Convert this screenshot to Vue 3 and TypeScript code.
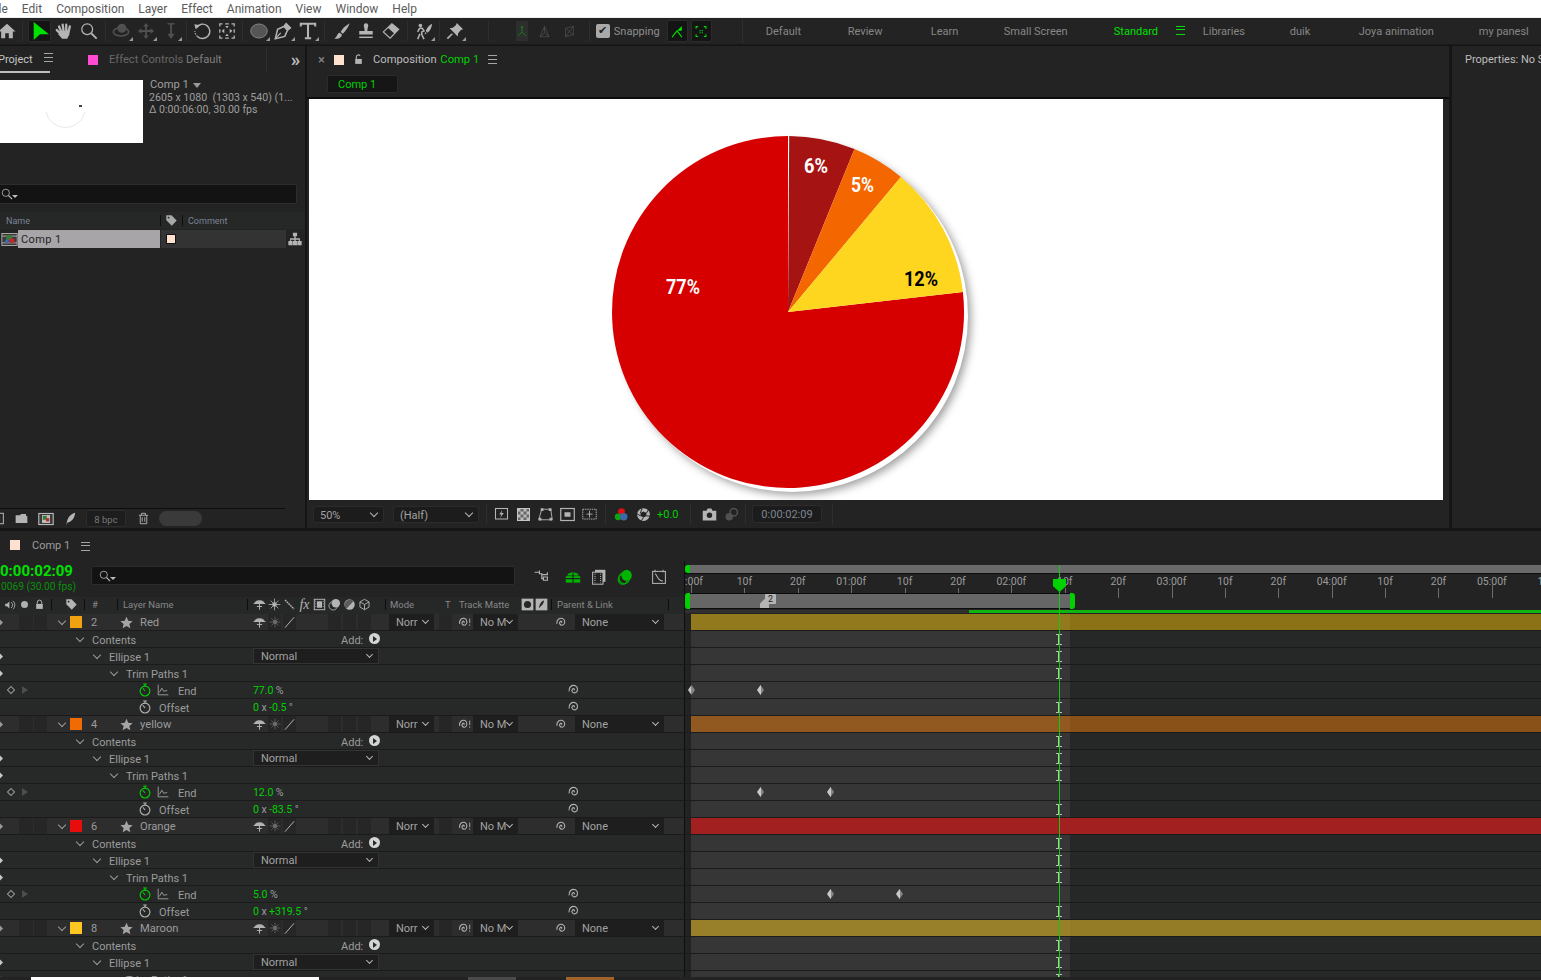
<script setup lang="ts">
import { computed } from 'vue'

// toolbar / panel glyphs, drawn on a 20x20 box
const ic: Record<string, string> = {
  home: '<path d="M10 2 19.5 10.5H16.5V18H12V12.5H8V18H3.5V10.5H.5Z" fill="currentColor"/>',
  arrow: '<path d="M3 0V20L10 13.5H20Z" fill="#00e000"/>',
  hand: '<g stroke="currentColor" stroke-width="2.6" stroke-linecap="round" fill="none"><path d="M7 11 4.5 5M9.5 10 8.5 3M12.5 10V3M15 11 16.5 5"/><path d="M4 11 2 9"/></g><path d="M5 10H16L16 14 13.5 18.5H8L3.5 13.5Z" fill="currentColor"/>',
  zoom: '<circle cx="8" cy="8" r="6" fill="none" stroke="currentColor" stroke-width="1.4"/><path d="M12.5 12.5 18.5 18.5" stroke="currentColor" stroke-width="2"/>',
  orbit: '<circle cx="11" cy="7" r="5" fill="currentColor"/><ellipse cx="10" cy="11" rx="8.5" ry="4.5" fill="none" stroke="currentColor" stroke-width="1.8"/>',
  move: '<path d="M10 1 13 5H11V9H15V7L19 10 15 13V11H11V15H13L10 19 7 15H9V11H5V13L1 10 5 7V9H9V5H7Z" fill="currentColor"/>',
  dolly: '<path d="M10 19 6 13H9V2H11V13H14Z" fill="currentColor"/><path d="M6 2H14" stroke="currentColor" stroke-width="1.5"/>',
  rotate: '<path d="M4 6A8 8 0 1 1 5 16" fill="none" stroke="currentColor" stroke-width="1.6"/><path d="M5 16A8 8 0 0 1 2 10" fill="none" stroke="currentColor" stroke-width="1.4" stroke-dasharray="1.5 1.5"/><path d="M1.5 2.5 8 3.5 3 8Z" fill="currentColor"/>',
  region: '<path d="M2 5V2H5M8 2H12M15 2H18V5M18 8V12M18 15V18H15M12 18H8M5 18H2V15M2 12V8" fill="none" stroke="currentColor" stroke-width="1.4"/><path d="M4 10 7 7.5V12.5ZM16 10 13 7.5V12.5ZM10 7 8 4.5H12ZM10 13 8 15.5H12Z" fill="currentColor"/>',
  ellipse: '<ellipse cx="10" cy="10" rx="9.2" ry="7.8" fill="#555" stroke="#8a8a8a" stroke-width="1"/>',
  pen: '<path d="M1.5 18.5 4 8 11 5 15 9 12 16Z" fill="none" stroke="currentColor" stroke-width="1.7"/><path d="M1.5 18.5 7.5 12M11.5 4 13.5 1.5 18.5 6.5 16 8.5Z" fill="currentColor" stroke="currentColor" stroke-width="1.3"/>',
  text: '<path d="M2 5V2H18V5M10 2V18M6.5 18H13.5" fill="none" stroke="currentColor" stroke-width="2.3"/>',
  brush: '<path d="M18.5 1.5C14 4 10 8 8.5 11L11 13C14 10.5 17 6 18.5 1.5Z" fill="currentColor"/><path d="M7.5 12C4.5 12.5 5 16.5 1.5 18.5 6 19.5 10 17 9.8 14Z" fill="currentColor"/>',
  stamp: '<path d="M7.5 4A2.5 2.5 0 0 1 12.5 4C12.5 6 11.5 7 11.5 10H17.5V14H2.5V10H8.5C8.5 7 7.5 6 7.5 4Z" fill="currentColor"/><path d="M2.5 17H17.5" stroke="currentColor" stroke-width="1.6"/>',
  eraser: '<path d="M1.5 11 11 2 18.5 8 9 18Z" fill="none" stroke="currentColor" stroke-width="1.3"/><path d="M6.5 6.5 11 2 18.5 8 14 13Z" fill="currentColor"/>',
  roto: '<circle cx="6" cy="4" r="2" fill="currentColor"/><path d="M5 7H8L10 10 7.5 11V14L10 19M5 7 3 11M5.5 13 3 19" fill="none" stroke="currentColor" stroke-width="1.7"/><path d="M19 2C15 4 13 7 12 10L14 12C17 10 18.5 6 19 2ZM11.5 11 10.5 14 13 12.5Z" fill="currentColor"/>',
  pin: '<path d="M12 1 19 8 16.5 9 13.5 12.5 13 16 4 7 7.5 6.5 11 3.5Z" fill="currentColor"/><path d="M7 13 1.5 18.5" stroke="currentColor" stroke-width="1.8"/>',
  axisA: '<path d="M10 2V12M10 12 3 18M10 12 17 18" fill="none" stroke="#0f8a0f" stroke-width="1.4"/><path d="M10 1 12 5H8Z" fill="#0f8a0f"/>',
  axisB: '<path d="M10 2V12M10 12 3 18M10 12 17 18M3 18H17M10 2 17 18M10 2 3 18" fill="none" stroke="currentColor" stroke-width="1.1"/>',
  axisC: '<path d="M4 5 16 2V15L4 18ZM4 5 16 15M16 2 4 18" fill="none" stroke="currentColor" stroke-width="1.1"/>',
  snapA: '<path d="M3 18 10 9 17 18" fill="none" stroke="#00e000" stroke-width="1.6"/><path d="M10 9 17 2V9Z" fill="#00e000"/>',
  snapB: '<path d="M3 6V3H6M14 3H17V6M17 14V17H14M6 17H3V14" fill="none" stroke="#00e000" stroke-width="1.5"/><path d="M8 8H9.5V9.5H8ZM11 8H12.5V9.5H11ZM8 11H9.5V12.5H8ZM11 11H12.5V12.5H11Z" fill="#00e000"/>',
  tag: '<path d="M2 2H10L18 10 10.5 18 2 9.5Z" fill="currentColor"/><circle cx="5.5" cy="5.5" r="1.4" fill="#222"/>',
  tree: '<path d="M7 1H13V6H11V9H17V13H19.5V19H13.5V13H15.5V11H11V13H13V19H7V13H9V11H4.5V13H6.5V19H.5V13H3V9H9V6H7Z" fill="currentColor"/>',
  comp: '<rect x="1" y="3" width="18" height="14" fill="#3a3a3a" stroke="#bbb"/><path d="M1 6H19M1 14H19" stroke="#bbb"/><rect x="6" y="5" width="7" height="6" fill="#3c7a3c"/><rect x="10" y="9" width="6" height="5" fill="#c02a2a"/><circle cx="7" cy="12" r="2.2" fill="#3d69b8"/>',
  folder: '<path d="M1 5H8L9 3H17V6H19V17H1Z" fill="currentColor"/>',
  film: '<rect x="1" y="3" width="18" height="14" fill="#3a3a3a" stroke="#ccc" stroke-width="1.2"/><rect x="5" y="5" width="10" height="10" fill="#bbb"/><rect x="6" y="6" width="5" height="5" fill="#3c7a3c"/><rect x="10" y="9" width="4" height="4" fill="#c02a2a"/>',
  feather: '<path d="M16 1C9 3 5 8 4 15L3 19 5 15C11 14 15 9 16 1Z" fill="currentColor"/>',
  trash: '<path d="M3 5H17M7 5V2H13V5M5 5V18H15V5M8 8V15M12 8V15" fill="none" stroke="currentColor" stroke-width="1.4"/>',
  burst: '<rect x="2" y="2" width="16" height="14" fill="none" stroke="currentColor" stroke-width="1.4"/><path d="M11 4 7 10H10L8 15 13 8H10Z" fill="currentColor"/>',
  grid: '<rect x="2" y="2" width="16" height="16" fill="#666" stroke="#ccc" stroke-width="1.3"/><path d="M2 2H6V6H2ZM10 2H14V6H10ZM6 6H10V10H6ZM14 6H18V10H14ZM2 10H6V14H2ZM10 10H14V14H10ZM6 14H10V18H6ZM14 14H18V18H14Z" fill="#bbb"/>',
  mask: '<path d="M5 3H17L19 17H1Z" fill="none" stroke="currentColor" stroke-width="1.2"/><path d="M3 1H7V5H3ZM15 1H19V5H15ZM0 15H4V19H0ZM16 15H20V19H16Z" fill="currentColor" transform="scale(.9) translate(1 1)"/>',
  safe: '<rect x="1" y="2" width="18" height="16" fill="none" stroke="currentColor" stroke-width="1.6"/><rect x="6" y="7" width="8" height="6" fill="currentColor"/>',
  guide: '<rect x="1" y="3" width="18" height="13" fill="none" stroke="currentColor" stroke-width="1.2" stroke-dasharray="2 1"/><path d="M10 5V14M6 9.5H14" stroke="currentColor" stroke-width="1.2"/>',
  rgb: '<circle cx="10" cy="6" r="4.5" fill="#e01010"/><circle cx="5.5" cy="13" r="4.5" fill="#0fa30f"/><circle cx="13" cy="13" r="5" fill="#3d69a8"/>',
  shutter: '<circle cx="10" cy="10" r="8.5" fill="currentColor"/><path d="M10 6 14 8V12L10 14 6 12V8Z" fill="#222"/><path d="M14 8 17 3M14 12 19 12M10 14 7 18.5M6 12 1.5 9M6 8 8 2" stroke="#222" stroke-width="1.3"/>',
  camera: '<path d="M1 5H6L7.5 2H12.5L14 5H19V18H1Z" fill="currentColor"/><circle cx="10" cy="11" r="3.6" fill="#222"/>',
  cameraDim: '<circle cx="13" cy="7" r="5" fill="none" stroke="#505050" stroke-width="2"/><circle cx="7" cy="13" r="5" fill="#505050"/>',
  flow: '<path d="M2 4H8M8 2V6H11V12H13M13 10H18V14H13ZM11 7H18V4" fill="none" stroke="currentColor" stroke-width="1.4"/>',
  shy: '<path d="M3 8C3 3 17 3 17 8ZM1 8.5H19M10 8V18M6 13H14" fill="currentColor" stroke="currentColor" stroke-width="1.5"/>',
  shyGreen: '<path d="M3 8C3 3 17 3 17 8Z" fill="#00b400"/><path d="M1 9H19V17H1Z" fill="#00b400"/><path d="M10 5V17M1 12H19" stroke="#1f1f1f" stroke-width="1.4"/>',
  frames: '<rect x="5" y="1" width="13" height="15" fill="currentColor"/><rect x="2" y="4" width="13" height="15" fill="#222" stroke="currentColor" stroke-width="1.3"/><path d="M5 6V17M12 6V17" stroke="currentColor" stroke-width="1.3" stroke-dasharray="1.3 1.3"/>',
  blurGreen: '<ellipse cx="12" cy="8" rx="6.5" ry="7" fill="#00b400"/><ellipse cx="9" cy="11.5" rx="6.5" ry="7" fill="none" stroke="#00b400" stroke-width="1.5"/><ellipse cx="7" cy="13" rx="5.5" ry="6" fill="none" stroke="#00b400" stroke-width="1.3"/>',
  graphEd: '<rect x="2" y="3" width="16" height="15" fill="none" stroke="currentColor" stroke-width="1.3"/><path d="M5 6C8 7 8 15 15 15M5 1V4M15 1V4" fill="none" stroke="currentColor" stroke-width="1.3"/>',
  speaker: '<path d="M2 8H5L9 4V16L5 12H2Z" fill="currentColor"/><path d="M12 5C15 8 15 12 12 15M15 3C19 7 19 13 15 17" fill="none" stroke="currentColor" stroke-width="1.4"/>',
  lock: '<path d="M6 9V6A4 4 0 0 1 14 6V9" fill="none" stroke="currentColor" stroke-width="1.8"/><rect x="4" y="9" width="12" height="9" fill="currentColor"/>',
  sun: '<circle cx="10" cy="10" r="3.5" fill="currentColor"/><path d="M10 1V19M1 10H19M4 4 16 16M16 4 4 16" stroke="currentColor" stroke-width="1.2"/>',
  slash: '<path d="M3 3 17 17" stroke="currentColor" stroke-width="2" stroke-dasharray="3 .8"/>',
  slashUp: '<path d="M3 18 17 2" stroke="currentColor" stroke-width="1.5"/>',
  filmCol: '<rect x="2" y="2" width="16" height="16" fill="none" stroke="currentColor" stroke-width="1.5"/><rect x="6" y="5" width="8" height="10" fill="currentColor"/><path d="M3 5H5M3 9H5M3 13H5M15 5H17M15 9H17M15 13H17" stroke="currentColor"/>',
  blur: '<circle cx="12" cy="8" r="6.5" fill="currentColor"/><circle cx="8" cy="12" r="6.5" fill="none" stroke="currentColor" stroke-width="1.3"/>',
  half: '<circle cx="10" cy="10" r="8" fill="currentColor"/><path d="M5 17 16 5A8 8 0 0 0 5 17Z" fill="#222" opacity=".6"/>',
  cube: '<path d="M10 2 17 6V14L10 18 3 14V6ZM3 6 10 10 17 6M10 10V18" fill="none" stroke="currentColor" stroke-width="1.4"/>',
  maskCol: '<rect x="1" y="1" width="18" height="18" fill="currentColor"/><circle cx="10" cy="10" r="5.5" fill="#262626"/>',
  pickCol: '<rect x="1" y="1" width="18" height="18" fill="currentColor"/><path d="M14 4C9 5 7 10 6 16 9 12 13 11 14 4Z" fill="#262626"/>',
  spiral: '<path d="M10 10.5C11.5 9 9.5 7 8 8.5 5.5 11 8 15 12 14 16 12.5 16 6 12 4 7 2 2 6 3 12" fill="none" stroke="currentColor" stroke-width="1.6"/>',
  spiralM: '<path d="M9 10.5C10.5 9 8.5 7 7 8.5 4.5 11 7 15 11 14 14.5 12.5 14.5 6 11 4 6 2 1.5 6 2.5 12" fill="none" stroke="currentColor" stroke-width="1.6"/><path d="M18 4V11M18 13V15" stroke="currentColor" stroke-width="1.4"/>',
  star: '<path d="M10 1 12.7 7.3 19.5 7.9 14.4 12.4 15.9 19 10 15.5 4.1 19 5.6 12.4.5 7.9 7.3 7.3Z" fill="currentColor"/>',
  watch: '<circle cx="10" cy="11.5" r="7" fill="none" stroke="currentColor" stroke-width="1.6"/><path d="M7.5 1.5H12.5M10 1.5V5M10 11.5 7 7.5" fill="none" stroke="currentColor" stroke-width="1.5"/>',
  graph: '<path d="M2 1V18H19" fill="none" stroke="currentColor" stroke-width="1.3"/><path d="M4 14 8 7 11 12 17 11" fill="none" stroke="currentColor" stroke-width="1.3"/>',
  lockOpen: '<path d="M6 9V5A4 4 0 0 1 13 3" fill="none" stroke="currentColor" stroke-width="2"/><rect x="4" y="9" width="12" height="9" fill="currentColor"/>',
}

const menus = ['File', 'Edit', 'Composition', 'Layer', 'Effect', 'Animation', 'View', 'Window', 'Help']

type ToolGroup = { name: string; corner?: boolean; dim?: boolean }[]
const toolGroups: ToolGroup[] = [
  [{ name: 'orbit', corner: true, dim: true }, { name: 'move', corner: true, dim: true }, { name: 'dolly', corner: true, dim: true }],
  [{ name: 'rotate' }, { name: 'region' }],
  [{ name: 'ellipse', corner: true }, { name: 'pen', corner: true }, { name: 'text', corner: true }],
  [{ name: 'brush' }, { name: 'stamp' }, { name: 'eraser' }],
  [{ name: 'roto', corner: true }],
  [{ name: 'pin', corner: true }],
]

const workspaces = [
  { label: 'Default', w: 82 },
  { label: 'Review', w: 83 },
  { label: 'Learn', w: 73 },
  { label: 'Small Screen', w: 110 },
  { label: 'Standard', w: 62, active: true },
  { label: '', w: 27, menu: true },
  { label: 'Libraries', w: 87 },
  { label: 'duik', w: 69 },
  { label: 'Joya animation', w: 120 },
  { label: 'my panesl', w: 61 },
]

const headSwitches = ['shy', 'sun', 'slash', 'fx', 'filmCol', 'blur', 'half', 'cube']

// pie, angles clockwise from 12 o'clock
const CX = 479
const CY = 213
const R = 176
function wedge(from: number, to: number) {
  const p = (a: number) => {
    const r = (a * Math.PI) / 180
    return `${(CX + R * Math.sin(r)).toFixed(1)} ${(CY - R * Math.cos(r)).toFixed(1)}`
  }
  return `M${CX} ${CY}L${p(from)}A${R} ${R} 0 ${to - from > 180 ? 1 : 0} 1 ${p(to)}Z`
}
const slices = [
  { color: '#d60000', d: wedge(83.5, 360) },
  { color: '#a51313', d: wedge(0.4, 22.2) },
  { color: '#f46600', d: wedge(22.2, 39.9) },
  { color: '#ffd61f', d: wedge(39.9, 83.5) },
]
const pieLabels = [
  { t: '6%', x: 507, y: 74, w: 24, c: '#fff' },
  { t: '5%', x: 553.5, y: 93, w: 23, c: '#fff' },
  { t: '12%', x: 612, y: 187, w: 34, c: '#000' },
  { t: '77%', x: 374, y: 195, w: 34, c: '#fff' },
]

const rulerLabels = ['0:00f', '10f', '20f', '01:00f', '10f', '20f', '02:00f', '10f', '20f', '03:00f', '10f', '20f', '04:00f', '10f', '20f', '05:00f', '10f']

interface Row {
  kind: 'layer' | 'contents' | 'ellipse' | 'trim' | 'end' | 'offset'
  num?: string
  name?: string
  swatch?: string
  barIn?: string
  barOut?: string
  value?: string
  angle?: string
  keys?: number[]
}

const layers = [
  { num: '2', name: 'Red', swatch: '#f0a30f', barIn: '#92791d', barOut: '#8c7217', end: '77.0', angle: '-0.5', keys: [0, 69] },
  { num: '4', name: 'yellow', swatch: '#f06a06', barIn: '#91581f', barOut: '#895118', end: '12.0', angle: '-83.5', keys: [69, 139] },
  { num: '6', name: 'Orange', swatch: '#e80d0d', barIn: '#a32020', barOut: '#a32020', end: '5.0', angle: '+319.5', keys: [139, 208] },
  { num: '8', name: 'Maroon', swatch: '#fdc620', barIn: '#98802b', barOut: '#947c26', end: '', angle: '', keys: [] },
]

const rows = computed<Row[]>(() => {
  const out: Row[] = []
  for (const l of layers) {
    out.push({ kind: 'layer', num: l.num, name: l.name, swatch: l.swatch, barIn: l.barIn, barOut: l.barOut })
    out.push({ kind: 'contents' }, { kind: 'ellipse' }, { kind: 'trim' })
    if (l.end) {
      out.push({ kind: 'end', value: l.end, keys: l.keys })
      out.push({ kind: 'offset', angle: l.angle })
    }
  }
  return out
})
</script>

<template>
  <div class="app">
    <div class="menu">
      <span v-for="m in menus" :key="m">{{ m }}</span>
    </div>

    <div class="toolbar">
      <svg class="ic tool-home" viewBox="0 0 20 20" v-html="ic.home"></svg>
      <i class="tsep first"></i>
      <div class="tool-box"><svg class="ic" viewBox="0 0 20 20" v-html="ic.arrow"></svg></div>
      <div class="tool"><svg class="ic" viewBox="0 0 20 20" v-html="ic.hand"></svg></div>
      <div class="tool"><svg class="ic" viewBox="0 0 20 20" v-html="ic.zoom"></svg></div>
      <template v-for="(g, i) in toolGroups" :key="i">
        <i class="tsep" :class="'g' + i"></i>
        <div v-for="t in g" :key="t.name" class="tool" :class="{ dim: t.dim, corner: t.corner }">
          <svg class="ic" viewBox="0 0 20 20" v-html="ic[t.name]"></svg>
        </div>
      </template>
      <i class="tsep wide"></i>
      <div class="axis-on"><svg class="ic" viewBox="0 0 20 20" v-html="ic.axisA"></svg></div>
      <div class="tool axis dim"><svg class="ic" viewBox="0 0 20 20" v-html="ic.axisB"></svg></div>
      <div class="tool axis dim"><svg class="ic" viewBox="0 0 20 20" v-html="ic.axisC"></svg></div>
      <i class="tsep snap-sep"></i>
      <span class="check">✔</span>
      <span class="snap-label">Snapping</span>
      <div class="snap-btn"><svg class="ic" viewBox="0 0 20 20" v-html="ic.snapA"></svg></div>
      <div class="snap-btn"><svg class="ic" viewBox="0 0 20 20" v-html="ic.snapB"></svg></div>
      <i class="tsep ws-sep"></i>
      <div class="workspaces">
        <div v-for="w in workspaces" :key="w.w + w.label" class="ws" :class="{ on: w.active }" :style="{ width: w.w + 'px' }">
          <span v-if="w.menu" class="burger green"></span>
          <template v-else>{{ w.label }}</template>
        </div>
      </div>
    </div>

    <div class="top">
      <section class="panel project">
        <div class="tabs">
          <div class="tab-project">Project<span class="burger"></span></div>
          <i class="pink"></i>
          <span class="tab-dim">Effect Controls <b>Default</b></span>
          <i class="vsep"></i>
          <span class="chev">»</span>
        </div>
        <div class="info">
          <div class="thumb">
            <svg viewBox="0 0 143 63" width="143" height="63"><path d="M46 32A20 20 0 0 0 85 32" fill="none" stroke="#e8e8e8"/><rect x="79" y="25" width="3" height="2" fill="#444"/></svg>
          </div>
          <div class="meta">
            <div class="meta-name">Comp 1 <i class="tri"></i></div>
            <div>2605 x 1080&nbsp; (1303 x 540) (1...</div>
            <div>Δ 0:00:06:00, 30.00 fps</div>
          </div>
        </div>
        <div class="search proj-search"><svg class="ic s12" viewBox="0 0 20 20" v-html="ic.zoom"></svg><i class="tri small"></i></div>
        <div class="proj-cols">
          <span class="col-name">Name</span>
          <i class="bar-sep"></i>
          <svg class="ic s13 tag" viewBox="0 0 20 20" v-html="ic.tag"></svg>
          <i class="bar-sep"></i>
          <span class="col-comment">Comment</span>
        </div>
        <div class="proj-row">
          <svg class="ic comp-ic" viewBox="0 0 20 20" v-html="ic.comp"></svg>
          <span class="proj-name">Comp 1</span>
          <span class="proj-cell"><i class="peach"></i></span>
          <svg class="ic s14 tree" viewBox="0 0 20 20" v-html="ic.tree"></svg>
        </div>
        <div class="proj-foot">
          <svg class="ic s13 foot-first" viewBox="0 0 20 20" v-html="ic.safe"></svg>
          <svg class="ic s13" viewBox="0 0 20 20" v-html="ic.folder"></svg>
          <svg class="ic s16" viewBox="0 0 20 20" v-html="ic.film"></svg>
          <svg class="ic s14" viewBox="0 0 20 20" v-html="ic.feather"></svg>
          <span class="bpc">8 bpc</span>
          <svg class="ic s13" viewBox="0 0 20 20" v-html="ic.trash"></svg>
          <i class="pill"></i>
        </div>
      </section>

      <section class="panel comp">
        <div class="tabs comp-tabs">
          <span class="close">×</span>
          <i class="peach big"></i>
          <svg class="ic s11 lockopen" viewBox="0 0 20 20" v-html="ic.lockOpen"></svg>
          <span class="comp-title">Composition <em>Comp 1</em></span>
          <span class="burger"></span>
        </div>
        <div class="subtabs"><span class="subtab">Comp 1</span></div>
        <div class="viewer">
          <svg class="pie" viewBox="0 0 1134 401" width="1134" height="401">
            <circle class="pie-back" :cx="CX + 4" :cy="CY + 4" :r="R" fill="#fff" />
            <path v-for="s in slices" :key="s.color" :d="s.d" :fill="s.color" />
            <text v-for="l in pieLabels" :key="l.t" :x="l.x" :y="l.y" :fill="l.c" :textLength="l.w" lengthAdjust="spacingAndGlyphs" class="pie-text">{{ l.t }}</text>
          </svg>
        </div>
        <div class="view-foot">
          <span class="vf-dd pct">50%<i class="caret"></i></span>
          <span class="vf-dd half">(Half)<i class="caret"></i></span>
          <i class="vf-sep a"></i>
          <svg class="ic s15" viewBox="0 0 20 20" v-html="ic.burst"></svg>
          <svg class="ic s15" viewBox="0 0 20 20" v-html="ic.grid"></svg>
          <svg class="ic s15" viewBox="0 0 20 20" v-html="ic.mask"></svg>
          <svg class="ic s15" viewBox="0 0 20 20" v-html="ic.safe"></svg>
          <svg class="ic s15" viewBox="0 0 20 20" v-html="ic.guide"></svg>
          <i class="vf-sep b"></i>
          <svg class="ic s15" viewBox="0 0 20 20" v-html="ic.rgb"></svg>
          <svg class="ic s15" viewBox="0 0 20 20" v-html="ic.shutter"></svg>
          <span class="exposure">+0.0</span>
          <i class="vf-sep c"></i>
          <svg class="ic s15" viewBox="0 0 20 20" v-html="ic.camera"></svg>
          <svg class="ic s15" viewBox="0 0 20 20" v-html="ic.cameraDim"></svg>
          <i class="vf-sep d"></i>
          <span class="vf-time">0:00:02:09</span>
          <i class="vf-sep"></i>
        </div>
      </section>

      <section class="panel props"><div class="props-title">Properties: No Selection</div></section>
    </div>

    <section class="timeline">
      <div class="tl-tab">
        <i class="peach tall"></i>
        <span class="tl-name">Comp 1</span>
        <span class="burger"></span>
      </div>

      <div class="tl-head">
        <div class="tl-left">
          <div class="ctrl">
            <div class="clock">
              <div class="time">0:00:02:09</div>
              <div class="fps">0069 (30.00 fps)</div>
            </div>
            <div class="search tl-search"><svg class="ic s12" viewBox="0 0 20 20" v-html="ic.zoom"></svg><i class="tri small"></i></div>
            <svg class="ic s16 first-ctl" viewBox="0 0 20 20" v-html="ic.flow"></svg>
            <svg class="ic s16 second-ctl" viewBox="0 0 20 20" v-html="ic.shyGreen"></svg>
            <svg class="ic s16" viewBox="0 0 20 20" v-html="ic.frames"></svg>
            <svg class="ic s16" viewBox="0 0 20 20" v-html="ic.blurGreen"></svg>
            <svg class="ic s16 last-ctl" viewBox="0 0 20 20" v-html="ic.graphEd"></svg>
          </div>
          <div class="cols">
            <svg class="ic s12 hc-speaker" viewBox="0 0 20 20" v-html="ic.speaker"></svg>
            <i class="hdot"></i>
            <svg class="ic s11 hc-lock" viewBox="0 0 20 20" v-html="ic.lock"></svg>
            <i class="hsep hs1"></i>
            <svg class="ic s13 hc-tag" viewBox="0 0 20 20" v-html="ic.tag"></svg>
            <i class="hsep hs2"></i>
            <span class="hnum">#</span>
            <i class="hsep hs3"></i>
            <span class="hname">Layer Name</span>
            <i class="hsep"></i>
            <div class="hswitches">
              <template v-for="s in headSwitches" :key="s">
                <span v-if="s === 'fx'" class="fx">fx</span>
                <svg v-else class="ic s13" viewBox="0 0 20 20" v-html="ic[s]"></svg>
              </template>
            </div>
            <i class="hsep hs4"></i>
            <span class="hmode">Mode</span>
            <span class="ht">T</span>
            <span class="htm">Track Matte</span>
            <svg class="ic s13 hmask" viewBox="0 0 20 20" v-html="ic.maskCol"></svg>
            <svg class="ic s13 hpick" viewBox="0 0 20 20" v-html="ic.pickCol"></svg>
            <i class="hsep hs5"></i>
            <span class="hparent">Parent &amp; Link</span>
            <i class="hsep hs6"></i>
          </div>
        </div>
        <div class="tl-right">
          <div class="navbar"><i class="handle"></i><i class="nav-fill"></i></div>
          <div class="ruler">
            <div v-for="(r, i) in rulerLabels" :key="i" class="tick">
              <span>{{ r }}</span>
              <i :class="{ major: i % 3 === 0 }"></i>
            </div>
          </div>
          <div class="workbar">
            <i class="handle"></i>
            <div class="work-fill">
              <span class="marker">2</span>
            </div>
            <i class="handle right"></i>
          </div>
          <div class="cachebar"><i></i></div>
        </div>
      </div>

      <div class="tl-rows">
        <div v-for="(r, i) in rows" :key="i" class="row" :class="'row-' + r.kind">
          <div class="row-left">
            <template v-if="r.kind === 'layer'">
              <i class="lead-mark"></i>
              <i class="cell c-a"></i><i class="cell c-b"></i>
              <i class="vee v-layer"></i>
              <i class="swatch" :style="{ background: r.swatch }"></i>
              <span class="num">{{ r.num }}</span>
              <svg class="ic s13 star" viewBox="0 0 20 20" v-html="ic.star"></svg>
              <span class="lname">{{ r.name }}</span>
              <span class="sw"><svg class="ic s13" viewBox="0 0 20 20" v-html="ic.shy"></svg></span>
              <span class="sw dark s-sun"><svg class="ic s12" viewBox="0 0 20 20" v-html="ic.sun"></svg></span>
              <span class="sw dark s-slash"><svg class="ic s13" viewBox="0 0 20 20" v-html="ic.slashUp"></svg></span>
              <i class="cell c-c"></i><i class="cell c-d"></i><i class="cell c-d"></i>
              <span class="dd dd-mode">Norr<i class="caret"></i></span>
              <i class="cell c-t"></i>
              <svg class="ic s13 sp1" viewBox="0 0 20 20" v-html="ic.spiralM"></svg>
              <span class="dd dd-mode dd-tm">No M<i class="caret"></i></span>
              <svg class="ic s13 sp2" viewBox="0 0 20 20" v-html="ic.spiral"></svg>
              <span class="dd dd-parent">None<i class="caret"></i></span>
            </template>
            <template v-else-if="r.kind === 'contents'">
              <i class="vee v-contents"></i>
              <span class="label">Contents</span>
              <span class="add">Add:</span>
              <span class="add-btn"></span>
            </template>
            <template v-else-if="r.kind === 'ellipse'">
              <i class="lead-mark sub"></i>
              <i class="vee v-ellipse"></i>
              <span class="label">Ellipse 1</span>
              <span class="dd dd-normal">Normal<i class="caret"></i></span>
            </template>
            <template v-else-if="r.kind === 'trim'">
              <i class="lead-mark sub"></i>
              <i class="vee v-trim"></i>
              <span class="label">Trim Paths 1</span>
            </template>
            <template v-else-if="r.kind === 'end'">
              <i class="nav-diamond"></i>
              <i class="nav-tri"></i>
              <span class="watch on"><svg class="ic s14" viewBox="0 0 20 20" v-html="ic.watch"></svg></span>
              <svg class="ic s12 graph" viewBox="0 0 20 20" v-html="ic.graph"></svg>
              <span class="label end-label">End</span>
              <span class="val"><em>{{ r.value }}</em> %</span>
              <svg class="ic s14 row-spiral" viewBox="0 0 20 20" v-html="ic.spiral"></svg>
            </template>
            <template v-else>
              <span class="watch off"><svg class="ic s14" viewBox="0 0 20 20" v-html="ic.watch"></svg></span>
              <span class="label off-label">Offset</span>
              <span class="val"><em>0</em> x <em>{{ r.angle }}</em> °</span>
              <svg class="ic s14 row-spiral" viewBox="0 0 20 20" v-html="ic.spiral"></svg>
            </template>
          </div>
          <div class="row-track">
            <div class="bar-in" :style="r.barIn ? { background: r.barIn } : undefined">
              <i v-for="k in r.keys" :key="k" class="key" :style="{ left: k + 'px' }"></i>
              <i v-if="r.kind !== 'layer' && r.kind !== 'end'" class="beam"></i>
            </div>
            <div class="bar-out" :style="r.barOut ? { background: r.barOut } : undefined"></div>
          </div>
        </div>
        <i class="playline"></i>
      </div>
      <i class="playhead"></i>
    </section>

    <div class="strip">
      <i class="s-white"></i><i class="s-gray"></i><i class="s-orange"></i>
    </div>
  </div>
</template>

<style scoped>
.app {
  position: relative;
  width: 1541px;
  height: 980px;
  overflow: hidden;
  background: #151515;
  font-family: Roboto, "Noto Sans", Arial, sans-serif;
  font-size: 11px;
  color: #9b9b9b;
  display: flex;
  flex-direction: column;
}
i { display: block; flex: none; font-style: normal; }
em { font-style: normal; }
.ic { display: block; flex: none; width: 18px; height: 18px; color: #b4b4b4; }
.s11 { width: 11px; height: 11px; }
.s12 { width: 12px; height: 12px; }
.s13 { width: 13px; height: 13px; }
.s14 { width: 14px; height: 14px; }
.s15 { width: 15px; height: 15px; }
.s16 { width: 16px; height: 16px; }

.burger {
  display: inline-block;
  width: 9px;
  height: 7px;
  border-top: 1px solid #a5a5a5;
  border-bottom: 1px solid #a5a5a5;
  position: relative;
  flex: none;
}
.burger::after {
  content: "";
  position: absolute;
  left: 0;
  right: 0;
  top: 2.5px;
  height: 1px;
  background: #a5a5a5;
}
.burger.green { border-color: #00e000; }
.burger.green::after { background: #00e000; }

/* menu */
.menu {
  height: 17px;
  background: #fff;
  border-bottom: 1px solid #eee;
  display: flex;
  align-items: center;
  gap: 14px;
  margin-left: -11px;
  font-size: 12px;
  color: #5c5c5c;
  flex: none;
}

/* toolbar */
.toolbar {
  height: 26px;
  flex: none;
  background: #232323;
  display: flex;
  align-items: center;
  border-bottom: 1px solid #1a1a1a;
}
.toolbar > * { flex: none; }
.tool-home { margin-left: -2px; width: 18px; height: 18px; }
.tool { width: 24.7px; display: flex; justify-content: center; position: relative; }
.tool.dim .ic { color: #505050; }
.tool.corner::after {
  content: "";
  position: absolute;
  right: 1px;
  bottom: -1px;
  border: 2px solid transparent;
  border-right-color: #9a9a9a;
  border-bottom-color: #9a9a9a;
}
.tsep { width: 1px; height: 20px; background: #2f2f2f; margin: 0 4px; }
.tsep.first { margin: 0 5px 0 6px; }
.tsep.g0 { margin: 0 3px 0 4px; }
.tsep.g1 { margin: 0 3px; }
.tsep.g2 { margin: 0 3px; }
.tsep.g3 { margin: 0 4px; }
.tsep.g4 { margin: 0 3px 0 4px; }
.tsep.g5 { margin: 0 2.3px 0 3px; }
.tsep.wide { margin: 0 26.7px 0 21px; }
.tool-box {
  width: 23px;
  height: 22px;
  margin-right: 0.5px;
  background: #141414;
  border: 1px solid #2c2c2c;
  border-radius: 2px;
  box-sizing: border-box;
  display: flex;
  align-items: center;
  justify-content: center;
}
.axis-on {
  width: 12px;
  height: 20px;
  margin-right: 4px;
  background: #2e2e2e;
  display: flex;
  justify-content: center;
  align-items: center;
}
.axis-on .ic { width: 12px; height: 14px; }
.axis { width: 25px; }
.axis .ic { width: 13px; height: 13px; }
.tsep.snap-sep { margin: 0 6px 0 7px; }
.check {
  width: 14px;
  height: 14px;
  background: #a9a9a9;
  color: #222;
  border-radius: 2px;
  font-size: 11px;
  line-height: 14px;
  text-align: center;
}
.snap-label { margin-left: 4px; width: 53px; color: #8f8f8f; }
.snap-btn {
  width: 21px;
  height: 22px;
  background: #141414;
  border: 1px solid #2c2c2c;
  border-radius: 2px;
  box-sizing: border-box;
  margin-right: 3px;
  display: flex;
  align-items: center;
  justify-content: center;
}
.snap-btn .ic { width: 14px; height: 15px; }
.tsep.ws-sep { margin: 0 23px 0 27px; height: 24px; }
.workspaces { display: flex; align-items: center; }
.ws { color: #878787; white-space: nowrap; flex: none; }
.ws.on { color: #00e000; }

/* top row */
.top { height: 483px; flex: none; display: flex; gap: 2px; padding-top: 1px; box-sizing: border-box; }
.panel { background: #232323; position: relative; overflow: hidden; }
.project { width: 305px; flex: none; display: flex; flex-direction: column; }
.tabs { height: 27px; display: flex; align-items: center; flex: none; }
.tab-project {
  width: 52px;
  height: 27px;
  margin-left: -2px;
  box-sizing: border-box;
  line-height: 27px;
  color: #c5c5c5;
  border-bottom: 2px solid #bdbdbd;
  position: relative;
  white-space: nowrap;
}
.tab-project .burger { margin-left: 11px; vertical-align: 1px; }
.pink { width: 10px; height: 10px; background: #ff4bd1; margin-left: 38px; }
.tab-dim { margin-left: 11px; color: #686868; white-space: nowrap; font-size: 11.2px; }
.tab-dim b { font-weight: 400; color: #7f7f7f; }
.vsep { width: 1px; height: 24px; background: #2f2f2f; margin-left: 44px; }
.chev { margin-left: 24px; color: #bbb; font-size: 19px; line-height: 18px; font-weight: 700; }
.info { display: flex; height: 63px; margin-top: 7px; flex: none; }
.thumb { width: 143px; height: 63px; background: #fff; flex: none; }
.thumb svg { display: block; }
.meta { margin-left: 6px; line-height: 12.6px; color: #9e9e9e; white-space: nowrap; font-size: 10.6px; }
.meta-name { display: flex; align-items: center; gap: 4px; padding-left: 1px; margin-top: -1px; font-size: 11.2px; }
.tri { width: 0; height: 0; border: 4px solid transparent; border-top: 5px solid #9a9a9a; border-bottom: 0; }
.tri.small { border-width: 3px; border-top-width: 3px; border-bottom-width: 0; border-top-color: #bbb; margin: 5px 0 0 -1px; }
.search {
  display: flex;
  align-items: center;
  background: #131313;
  border: 1px solid #2d2d2d;
  border-radius: 2px;
  box-sizing: border-box;
}
.proj-search { margin: 41px 8px 0 -5px; height: 20px; padding-left: 5px; flex: none; }
.proj-cols {
  margin-top: 8px;
  height: 17px;
  flex: none;
  background: #262727;
  display: flex;
  align-items: center;
  font-size: 9px;
  color: #7a8494;
}
.col-name { margin-left: 6px; width: 154px; }
.bar-sep { width: 1px; height: 11px; background: #0f0f0f; }
.tag { margin: 0 4px; color: #a8a8a8; width: 13px; }
.col-comment { margin-left: 5px; }
.proj-row { margin-top: 1px; height: 18px; display: flex; align-items: center; flex: none; }
.comp-ic { margin-left: 1px; width: 17px; height: 17px; }
.proj-name {
  width: 142px;
  height: 18px;
  line-height: 20px;
  background: #a7a5a7;
  color: #1f1f1f;
  padding-left: 3px;
  box-sizing: border-box;
  flex: none;
  letter-spacing: 0.4px;
}
.proj-cell {
  margin-left: 1px;
  width: 125px;
  height: 18px;
  background: #333;
  display: flex;
  align-items: center;
  padding-left: 5px;
  box-sizing: border-box;
  flex: none;
}
.peach { width: 10px; height: 10px; background: #fde0d0; border: 1px solid #111; box-sizing: border-box; }
.tree { margin-left: 2px; }
.proj-foot {
  margin-top: auto;
  height: 19px;
  display: flex;
  align-items: center;
  border-top: 1px solid #0e0e0e;
  width: 285px;
  flex: none;
}
.foot-first { margin-left: -9px; margin-right: 11px; }
.proj-foot .s13:nth-child(2) { margin-right: 10px; }
.proj-foot .s16 { margin-right: 10px; }
.bpc {
  margin-left: 8px;
  width: 40px;
  height: 17px;
  line-height: 17px;
  font-size: 9.5px;
  text-align: center;
  background: #1d1d1d;
  border: 1px solid #2c2c2c;
  box-sizing: border-box;
  border-radius: 2px;
  color: #787878;
}
.proj-foot .bpc + .s13 { margin-left: 11px; }
.pill { width: 43px; height: 15px; border-radius: 8px; background: #3a3a3a; margin-left: 9px; }

/* composition */
.comp { width: 1142px; flex: none; display: flex; flex-direction: column; }
.comp-tabs { color: #bbb; }
.close { margin-left: 11px; color: #8c8c8c; font-size: 13px; width: 16px; }
.peach.big { border: 0; }
.lockopen { margin-left: 9px; }
.comp-title { margin-left: 9px; color: #bdbdbd; font-size: 11.2px; white-space: nowrap; }
.comp-title em { color: #00d100; margin-left: 1px; }
.comp-tabs .burger { margin-left: 9px; }
.subtabs { height: 24px; border-bottom: 2px solid #0c0c0c; flex: none; }
.subtab {
  display: block;
  margin: 2px 0 0 20px;
  width: 71px;
  height: 18px;
  line-height: 18px;
  padding-left: 10px;
  box-sizing: border-box;
  color: #00d100;
  background: #161616;
  border: 1px solid #2a2a2a;
  border-radius: 2px;
}
.viewer { margin-left: 2px; width: 1134px; height: 401px; background: #fff; flex: none; }
.pie { display: block; }
.pie-back { filter: drop-shadow(3px 3px 4px rgba(0, 0, 0, 0.38)); }
.pie-text { font-family: Roboto, sans-serif; font-weight: 700; font-size: 20px; text-anchor: middle; }
.view-foot {
  height: 27px;
  padding-top: 1px;
  box-sizing: border-box;
  display: flex;
  align-items: center;
  gap: 7px;
  flex: none;
}
.vf-dd {
  height: 17px;
  line-height: 18px;
  background: #1c1c1c;
  border: 1px solid #2b2b2b;
  box-sizing: border-box;
  border-radius: 2px;
  padding-left: 6px;
  position: relative;
  color: #a2a2a2;
  flex: none;
}
.pct { margin-left: 6px; width: 71px; }
.half { margin-left: 2px; width: 86px; }
.caret {
  position: absolute;
  right: 6px;
  top: 50%;
  width: 5px;
  height: 5px;
  margin-top: -4.5px;
  border-right: 1px solid #b5b5b5;
  border-bottom: 1px solid #b5b5b5;
  transform: rotate(45deg);
}
.vf-sep { width: 1px; height: 20px; background: #2f2f2f; margin: 0 3px; }
.vf-sep.a { margin: 0; }
.vf-sep.b { margin: 0 1px; }
.vf-sep.c { margin: 0 4px; }
.vf-sep.d { margin: 0 -1px; }
.exposure { color: #00d100; margin-left: -1px; width: 22px; white-space: nowrap; }
.vf-time {
  width: 70px;
  height: 18px;
  line-height: 17px;
  text-align: center;
  background: #1c1c1c;
  border: 1px solid #2b2b2b;
  box-sizing: border-box;
  border-radius: 2px;
  color: #7d8592;
  flex: none;
}

.props { flex: 1; margin-left: 1px; }
.props-title { margin: 7px 0 0 13px; color: #bdbdbd; white-space: nowrap; }

/* timeline */
.timeline {
  margin-top: 3px;
  flex: 1;
  background: #232323;
  position: relative;
  display: flex;
  flex-direction: column;
  min-height: 0;
}
.tl-tab { height: 30px; display: flex; align-items: center; flex: none; color: #9d9d9d; }
.tl-name { margin-top: -2px; }
.peach.tall { width: 10px; height: 10px; border: 0; margin: -3px 12px 0 10px; }
.tl-tab .burger { margin-left: 11px; }
.tl-head { display: flex; height: 53px; flex: none; }
.tl-left { width: 684px; flex: none; display: flex; flex-direction: column; }
.ctrl { height: 36px; display: flex; align-items: flex-start; }
.clock { width: 91px; flex: none; margin-top: 1px; }
.time { color: #00e000; font-weight: 700; font-size: 15px; line-height: 18px; white-space: nowrap; }
.fps { color: #089108; font-size: 10.2px; line-height: 13px; white-space: nowrap; margin-left: 1px; }
.tl-search { width: 424px; height: 19px; margin-top: 5px; padding-left: 7px; flex: none; }
.ctrl > .ic { margin-top: 8px; margin-left: 10px; }
.ctrl > .first-ctl { margin-left: 18px; }
.ctrl > .second-ctl { margin-left: 16px; }
.ctrl > .last-ctl { margin-left: 18px; }
.cols {
  height: 17px;
  padding-bottom: 2px;
  box-sizing: border-box;
  display: flex;
  align-items: center;
  font-size: 9.5px;
  color: #878787;
  background: #262727;
}
.hc-speaker { margin-left: 4px; }
.hdot { width: 7px; height: 7px; border-radius: 50%; background: #b0b0b0; margin-left: 5px; }
.hc-lock { margin-left: 6px; }
.hsep { width: 1px; height: 11px; background: #0d0d0d; }
.hs1 { margin-left: 6px; }
.hc-tag { margin-left: 13px; }
.hs2 { margin-left: 6px; }
.hnum { margin-left: 7px; width: 25px; }
.hname { margin-left: 5px; width: 124px; white-space: nowrap; }
.hswitches { display: flex; align-items: center; gap: 2px; margin-left: 5px; }
.fx { font-family: "Liberation Serif", serif; font-style: italic; font-size: 14px; color: #b4b4b4; width: 13px; text-align: center; }
.hs4 { margin-left: 14px; }
.hmode { margin-left: 4px; width: 55px; }
.ht { width: 14px; }
.htm { width: 62px; white-space: nowrap; }
.hmask { margin-left: 0; }
.hpick { margin-left: 1px; }
.hs5 { margin-left: 3px; }
.hparent { margin-left: 5px; width: 111px; }

.tl-right { flex: 1; min-width: 0; padding-top: 4px; overflow: hidden; border-left: 1px solid #0e0e0e; box-sizing: border-box; }
.navbar { height: 8px; display: flex; }
.handle { width: 5px; background: #00d100; border-radius: 3px 0 0 3px; }
.handle.right { border-radius: 0 3px 3px 0; }
.nav-fill { flex: 1; background: #6a6a6a; }
.ruler {
  height: 20px;
  display: flex;
  margin-left: -20.7px;
  border-top: 1px solid #0e0e0e;
  box-sizing: border-box;
}
.tick {
  width: 53.4px;
  flex: none;
  display: flex;
  flex-direction: column;
  align-items: center;
  color: #9b9b9b;
  font-size: 10.5px;
  line-height: 12px;
  padding-top: 2px;
  white-space: nowrap;
  position: relative;
}
.tick span { height: 12px; }
.tick i { position: absolute; left: 50%; bottom: -5px; width: 1px; height: 10px; background: #6e6e6e; }
.tick i.major { height: 13px; }
.workbar {
  height: 16px;
  display: flex;
  width: 390px;
  position: relative;
}
.work-fill { flex: 1; background: #666; position: relative; border-top: 1px solid #0c0c0c; border-bottom: 1px solid #0c0c0c; box-sizing: border-box; }
.marker {
  position: absolute;
  left: 75px;
  top: 0;
  width: 11px;
  height: 10px;
  line-height: 10px;
  font-size: 9px;
  text-align: center;
  background: #b5b5b5;
  color: #222;
  border-radius: 1px;
}
.marker::after {
  content: "";
  position: absolute;
  left: -5px;
  top: 5px;
  width: 9px;
  height: 9px;
  background: #b5b5b5;
  clip-path: polygon(50% 0, 100% 50%, 100% 100%, 0 100%, 0 50%);
}
.cachebar { margin-top: 1px; height: 3px; background: #303030; }
.cachebar i { height: 3px; margin-left: 284px; background: #0fb60f; }

.tl-rows { position: relative; flex: none; }
.row { height: 17px; display: flex; box-sizing: border-box; border-bottom: 1px solid #1b1b1b; }
.row-left {
  width: 684px;
  flex: none;
  display: flex;
  align-items: center;
  background: #272828;
  position: relative;
  color: #9c9c9c;
  white-space: nowrap;
}
.row-layer .row-left { background: #2d2d2d; }
.lead-mark {
  position: absolute;
  left: -3px;
  top: 6px;
  width: 5px;
  height: 5px;
  background: #9a9a9a;
  transform: rotate(45deg);
}
.lead-mark.sub { background: #c8c8c8; }
.cell { width: 14px; height: 16px; background: #262626; }
.c-a { margin-left: 19px; }
.c-b { margin-left: 1px; width: 13px; }
.vee {
  width: 5px;
  height: 5px;
  border-right: 1px solid #9b9b9b;
  border-bottom: 1px solid #9b9b9b;
  transform: rotate(45deg);
  margin-top: -3px;
}
.v-layer { margin-left: 12px; }
.swatch { width: 12px; height: 12px; margin-left: 5px; }
.num { margin-left: 9px; width: 20px; flex: none; }
.star { margin-left: 9px; color: #a5a5a5; }
.lname { margin-left: 7px; width: 113px; flex: none; font-size: 11.2px; }
.sw { width: 12px; height: 16px; display: flex; align-items: center; justify-content: center; flex: none; }
.sw.dark { background: #262626; width: 13px; }
.s-sun { margin-left: 3px; }
.s-sun .ic { color: #6d6d6d; }
.s-slash { margin-left: 2px; }
.c-c { margin-left: 32px; width: 13px; }
.c-d { margin-left: 2px; width: 13px; }
.dd {
  position: relative;
  height: 16px;
  line-height: 17px;
  background: #1e1e1e;
  padding-left: 7px;
  box-sizing: border-box;
  color: #a2a2a2;
  flex: none;
  overflow: hidden;
}
.dd .caret { right: 6px; width: 4px; height: 4px; }
.dd-mode { margin-left: 18px; width: 45px; }
.c-t { margin-left: 5px; width: 13px; }
.sp1 { margin-left: 6px; }
.dd-tm { margin-left: 2px; }
.sp2 { margin-left: 37px; }
.dd-parent { margin-left: 7px; width: 89px; }
.v-contents { margin-left: 77px; }
.v-ellipse { margin-left: 94px; }
.v-trim { margin-left: 111px; }
.label { margin-left: 9px; padding-top: 2px; }
.add { position: absolute; left: 341px; top: 3px; }
.add-btn {
  position: absolute;
  left: 369px;
  top: 2px;
  width: 11px;
  height: 11px;
  border-radius: 50%;
  background: #d4d4d4;
}
.add-btn::after {
  content: "";
  position: absolute;
  left: 4px;
  top: 2.5px;
  border: 3px solid transparent;
  border-left: 4px solid #272828;
  border-right: 0;
}
.dd-normal {
  position: absolute;
  left: 253px;
  top: 0;
  width: 126px;
  border: 1px solid #333;
  line-height: 15px;
}
.nav-diamond {
  width: 6px;
  height: 6px;
  box-sizing: border-box;
  border: 1px solid #989898;
  transform: rotate(45deg);
  margin-left: 8px;
}
.nav-tri { margin-left: 8px; border: 4px solid transparent; border-left: 6px solid #4d4d4d; border-right: 0; width: 0; height: 0; }
.watch { width: 14px; height: 16px; display: flex; align-items: center; justify-content: center; flex: none; }
.watch.on { margin-left: 110px; background: #262626; }
.watch.on .ic { color: #00d100; }
.watch.off { margin-left: 138px; }
.graph { margin-left: 5px; }
.end-label { margin-left: 9px; width: 75px; }
.off-label { margin-left: 7px; width: 94px; }
.val { color: #9c9c9c; font-size: 10.6px; letter-spacing: -0.1px; width: 319px; flex: none; }
.val em { color: #00d100; }
.row-spiral { flex: none; margin-left: -5px; }

.row-track { flex: 1; min-width: 0; display: flex; border-left: 1px solid #0e0e0e; padding-left: 6px; background: #232323; }
.bar-in { width: 379px; flex: none; background: #363636; position: relative; }
.bar-out { flex: 1; background: #262827; }
.key {
  position: absolute;
  top: 3px;
  width: 7px;
  height: 10px;
  margin-left: -3px;
  background: linear-gradient(90deg, #c8c8c8 50%, #858585 50%);
  clip-path: polygon(50% 0, 100% 50%, 50% 100%, 0 50%);
}
.beam {
  position: absolute;
  left: 365px;
  top: 3px;
  width: 6px;
  height: 11px;
  border-top: 1px solid #bcbcbc;
  border-bottom: 1px solid #bcbcbc;
  box-sizing: border-box;
}
.beam::after {
  content: "";
  position: absolute;
  left: 2px;
  top: 0;
  bottom: 0;
  width: 2px;
  background: #b5c9b5;
}
.playline {
  position: absolute;
  left: 1059px;
  top: 0;
  bottom: 0;
  width: 1px;
  background: #12c912;
}
.playhead {
  position: absolute;
  left: 1053px;
  top: 34px;
  width: 13px;
  height: 49px;
  pointer-events: none;
  background: linear-gradient(#12c912, #12c912) 6px 0 / 1px 49px no-repeat;
}
.playhead::after {
  content: "";
  position: absolute;
  left: 0;
  top: 14px;
  width: 13px;
  height: 13px;
  background: #00d100;
  clip-path: polygon(0 0, 100% 0, 100% 55%, 50% 100%, 0 55%);
}

.strip { position: absolute; left: 0; right: 0; bottom: 0; height: 3px; display: flex; background: #232323; }
.s-white { width: 288px; margin-left: 31px; background: #fff; }
.s-gray { width: 48px; margin-left: 149px; background: #4a4a4a; }
.s-orange { width: 48px; margin-left: 50px; background: #a0632a; }
</style>
